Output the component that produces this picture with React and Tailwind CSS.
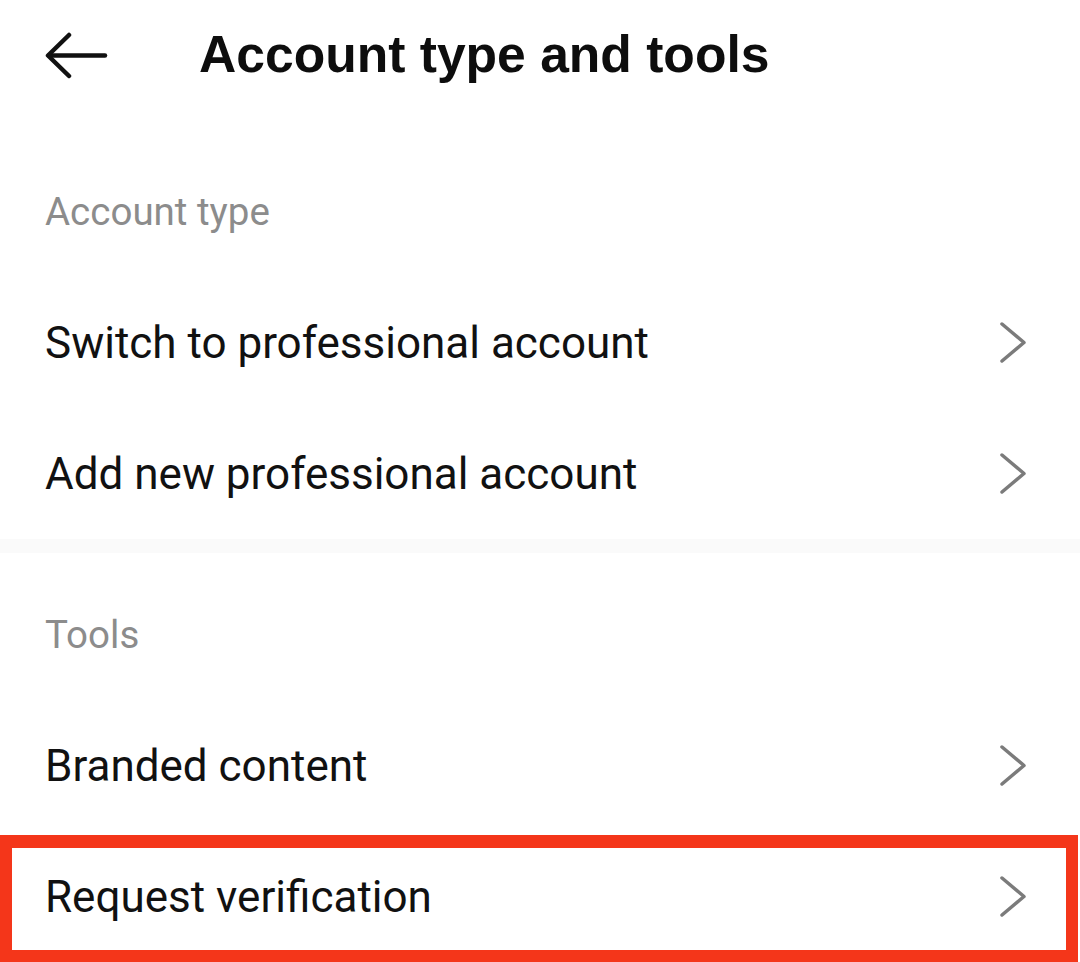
import React from "react";

function Chevron() {
  return (
    <svg width="30" height="44" viewBox="0 0 30 44" fill="none" className="shrink-0">
      <path d="M4 3 L26 21.5 L4 40" stroke="#7b7b7b" strokeWidth="3.5" strokeLinecap="round" strokeLinejoin="round" />
    </svg>
  );
}

function Row({ label }) {
  return (
    <div className="flex h-[131px] items-center justify-between pl-[45px] pr-[52px]">
      <span className="text-[44px] leading-[52px] text-[#111111]" style={{ fontFamily: "Roboto, 'Noto Sans', sans-serif" }}>
        {label}
      </span>
      <Chevron />
    </div>
  );
}

export default function App() {
  return (
    <div className="relative h-[962px] w-[1080px] overflow-hidden bg-white">
      <div className="flex h-[108px] items-center">
        <svg width="64" height="50" viewBox="0 0 64 50" fill="none" className="ml-[45px] mt-[6px]">
          <path d="M60 23.5 H4" stroke="#111" strokeWidth="4.5" strokeLinecap="round" />
          <path d="M24 3 L3 23.5 L24 44" stroke="#111" strokeWidth="4.5" strokeLinecap="round" strokeLinejoin="round" />
        </svg>
        <h1 className="ml-[90px] text-[51.6px] font-bold leading-[60px] text-[#0d0d0d]" style={{ fontFamily: "'Liberation Sans', Arial, sans-serif" }}>
          Account type and tools
        </h1>
      </div>

      <div className="h-[169px] pl-[45px] pt-[84px]">
        <div className="text-[38.5px] leading-[40px] text-[#8c8c8c]" style={{ fontFamily: "Roboto, 'Noto Sans', sans-serif" }}>
          Account type
        </div>
      </div>
      <Row label="Switch to professional account" />
      <Row label="Add new professional account" />
      <div className="h-[14px] bg-[#fafafa]" />

      <div className="h-[147px] pl-[45px] pt-[62px]">
        <div className="text-[38.5px] leading-[40px] text-[#8c8c8c]" style={{ fontFamily: "Roboto, 'Noto Sans', sans-serif" }}>
          Tools
        </div>
      </div>
      <Row label="Branded content" />
      <Row label="Request verification" />

      <div className="pointer-events-none absolute left-0 top-[835px] h-[127px] w-[1078px] border-[12px] border-t-[13px] border-[#f4361a]" />
    </div>
  );
}
